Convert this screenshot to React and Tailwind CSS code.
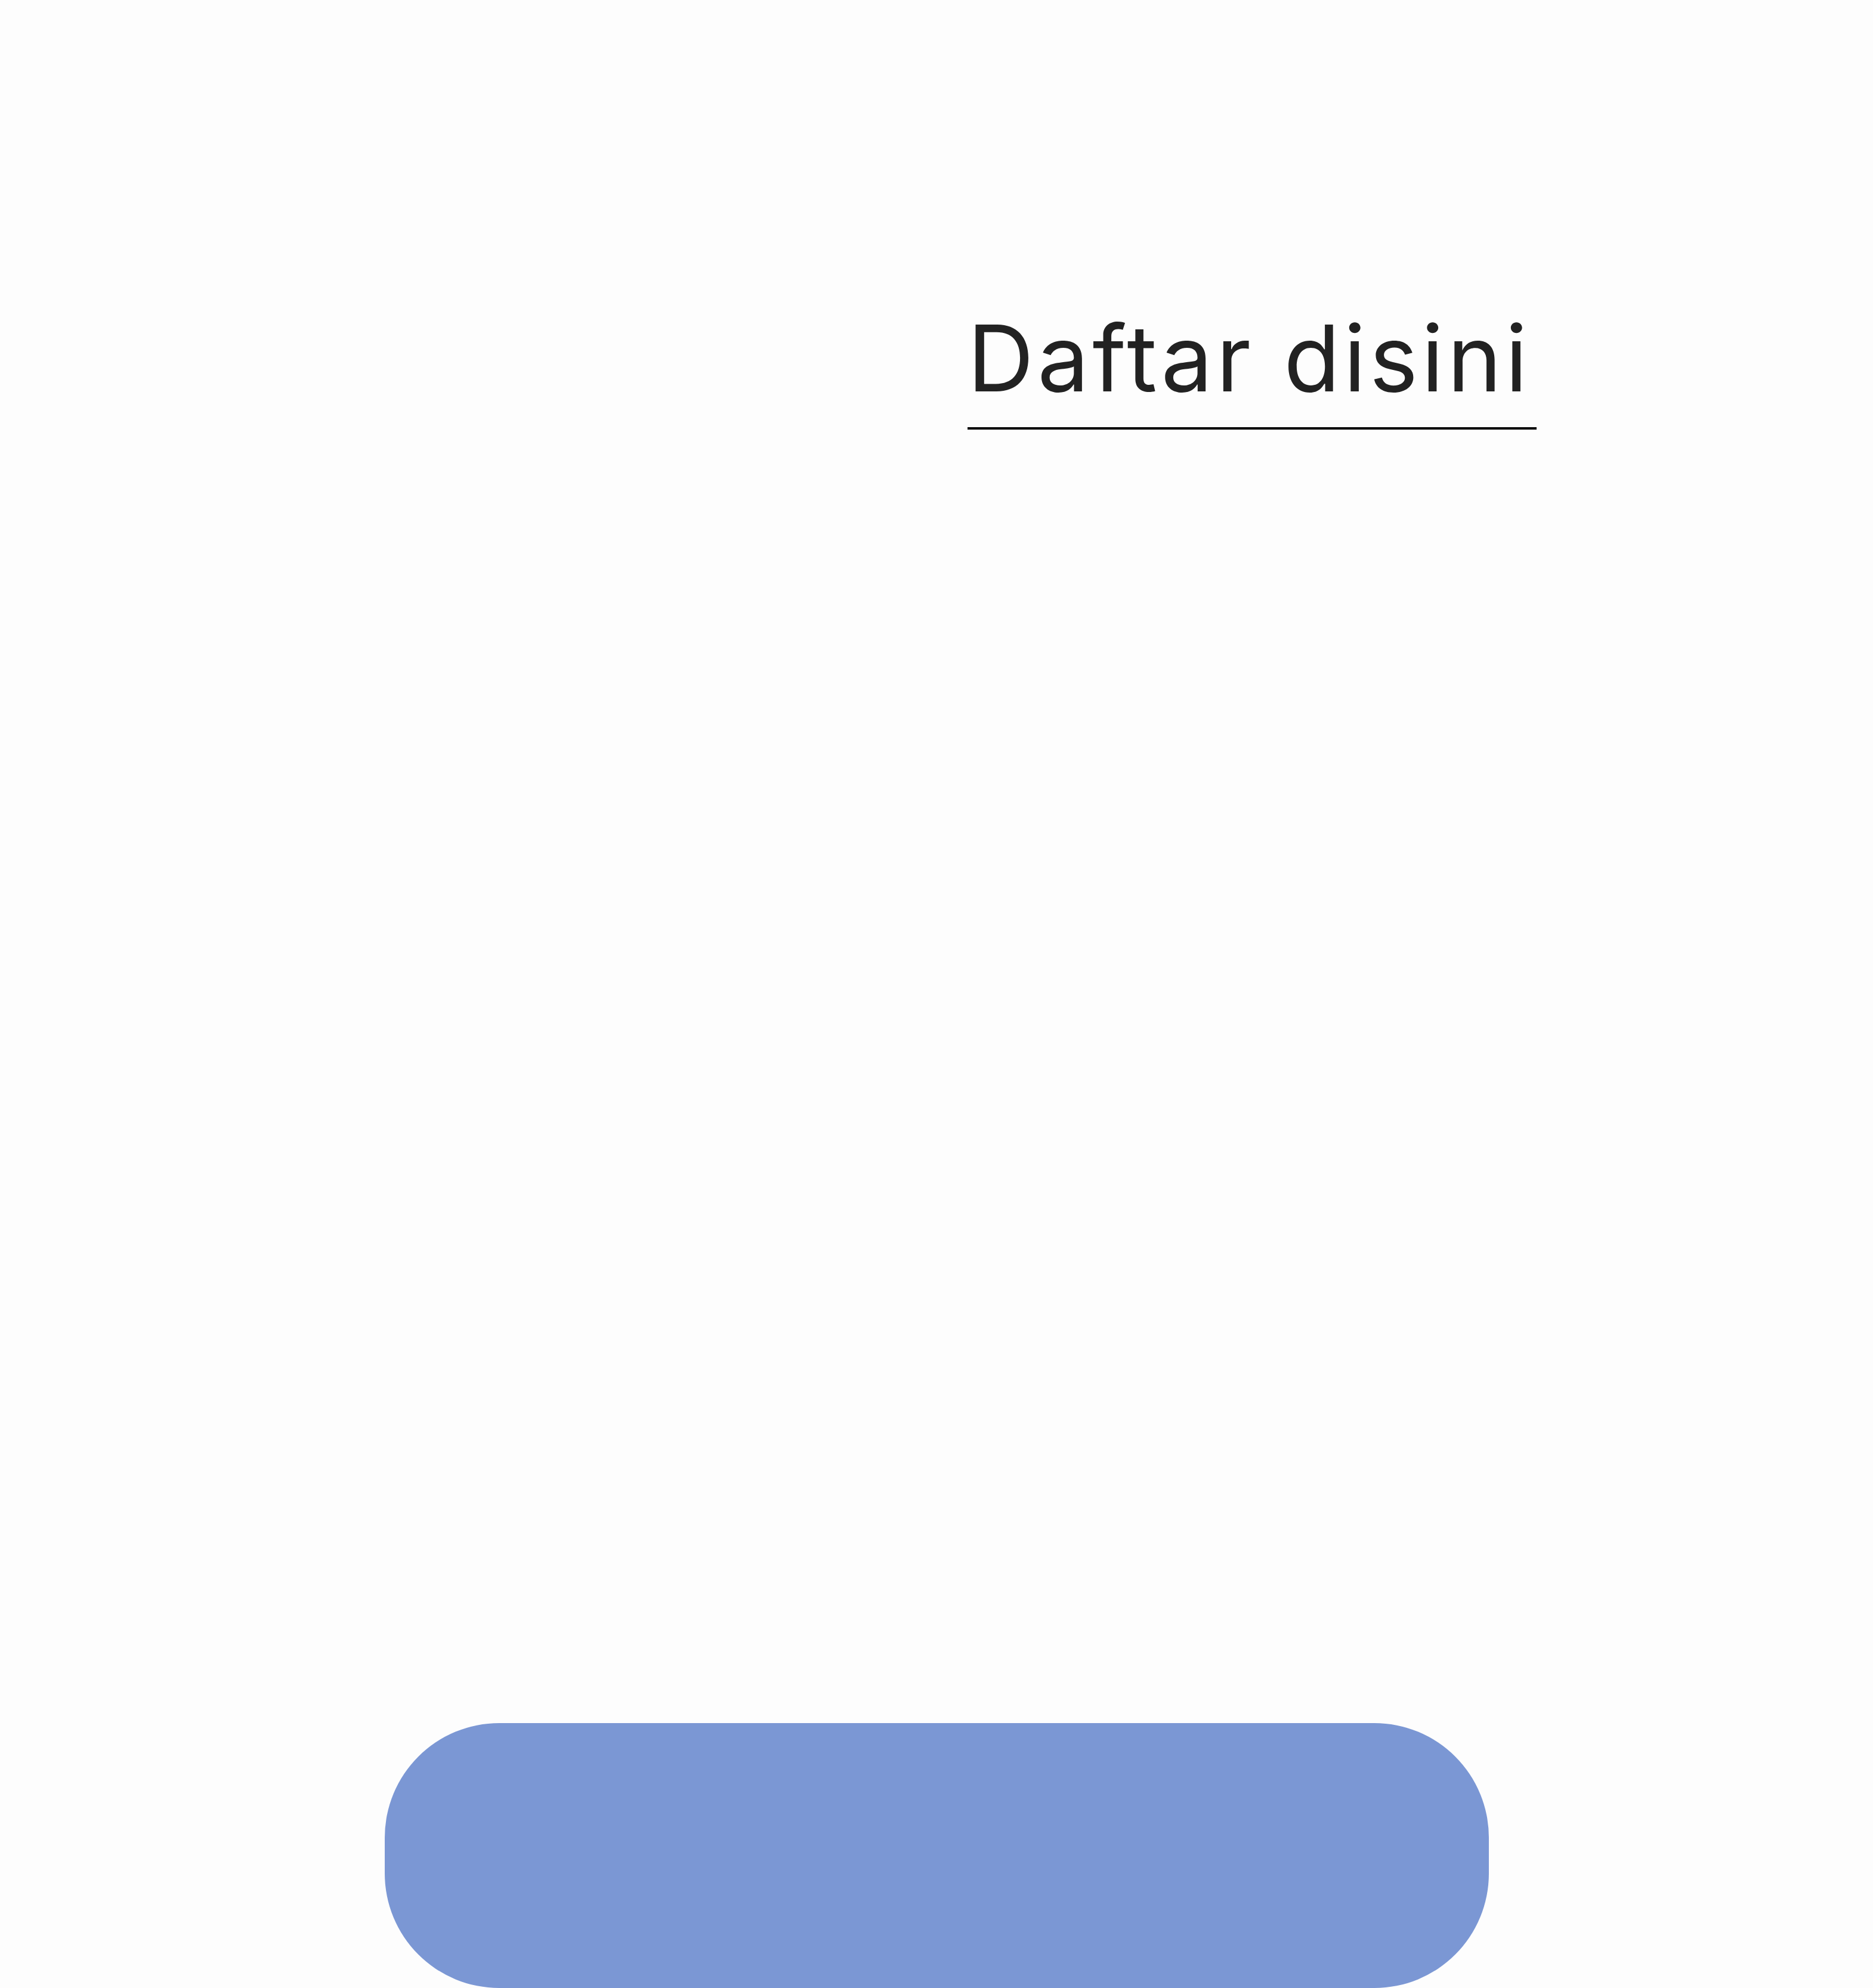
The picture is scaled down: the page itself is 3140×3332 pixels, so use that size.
export default function App() {
  return (
    <div className="w-[3140px] h-[3332px] bg-[#fdfdfd] flex flex-col overflow-hidden">
      <div className="pt-[484px] pl-[1622px]">
        <h1
          className="w-[954px] border-b-4 border-black text-[154px] leading-[232px] font-normal text-[#222222] tracking-[6px] whitespace-nowrap"
          style={{ fontFamily: "Inter, 'Noto Sans', sans-serif" }}
        >
          Daftar disini
        </h1>
      </div>
      <div className="mt-auto flex justify-center">
        <button className="w-[1851px] h-[444px] rounded-[192px] bg-[#7b97d4]" />
      </div>
    </div>
  );
}
